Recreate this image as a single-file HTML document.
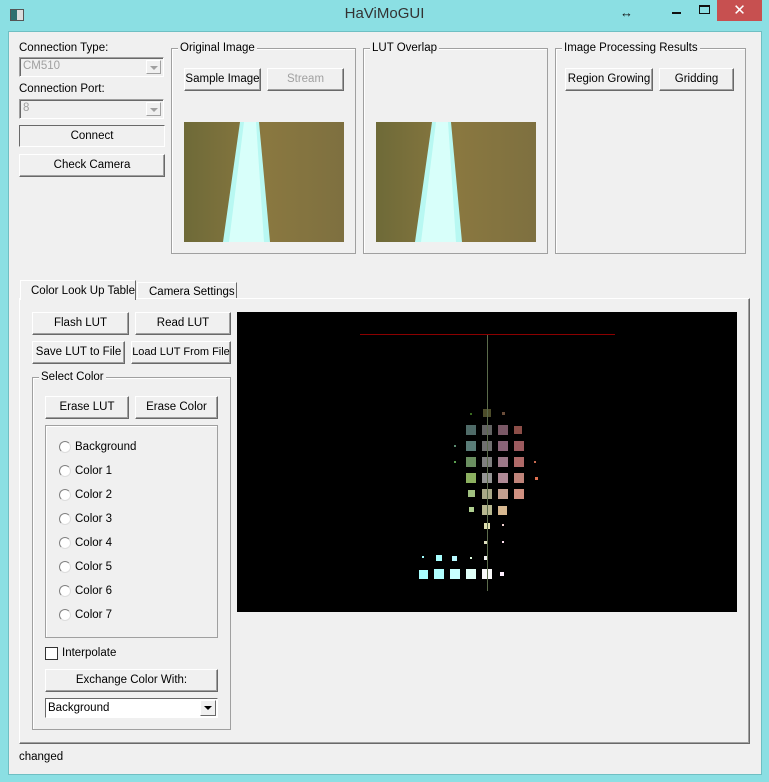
<!DOCTYPE html>
<html><head><meta charset="utf-8"><style>
*{box-sizing:border-box;margin:0;padding:0}
body{width:769px;height:782px;background:#8bdfe3;font-family:"Liberation Sans",sans-serif;font-size:11.5px;color:#000;position:relative;overflow:hidden;white-space:nowrap}
.a{position:absolute}
.client{position:absolute;left:8px;top:31px;width:754px;height:744px;background:#f0f0f0;border:1px solid #6fbfc3}
.btn{position:absolute;background:#f0f0f0;border:1px solid;border-color:#fff #696969 #696969 #fff;box-shadow:inset -1px -1px 0 #a0a0a0;text-align:center;line-height:20px;font-size:11.5px;white-space:nowrap;overflow:hidden}
.dis{color:#a0a0a0}
.grp{position:absolute;border:1px solid #a0a0a0;box-shadow:1px 1px 0 #fff inset}
.grp span{position:absolute;top:-8px;left:6px;background:#f0f0f0;padding:0 2px;line-height:14px}
.combo{position:absolute;border:1px solid;border-color:#a0a0a0 #fff #fff #a0a0a0;box-shadow:inset 1px 1px 0 #696969;background:#f0f0f0;color:#a0a0a0;padding-left:3px;line-height:17px}
.arr{position:absolute;right:2px;top:2px;width:15px;height:14px;border:1px solid;border-color:#fff #a0a0a0 #a0a0a0 #fff}
.arr:after{content:"";position:absolute;left:3px;top:5px;border-left:4px solid transparent;border-right:4px solid transparent;border-top:4px solid #a0a0a0}
.rad{position:absolute;left:59px;width:12px;height:12px;border-radius:50%;border:1px solid;border-color:#808080 #ddd #ddd #808080;background:#fff}
.rl{position:absolute;left:75px;line-height:14px}
</style></head><body>
<div class="a" style="left:10px;top:9px;width:14px;height:12px;border:1px solid #555;background:linear-gradient(90deg,#2f6f6f 50%,#ddd 50%)"></div>
<div class="a" style="left:0;width:769px;top:5px;text-align:center;font-size:15px;color:#333">HaViMoGUI</div>
<div class="a" style="left:620px;top:5px;font-size:13px;color:#111">↔</div>
<div class="a" style="left:672px;top:12px;width:9px;height:2px;background:#111"></div>
<div class="a" style="left:699px;top:5px;width:11px;height:9px;border:1px solid #111;border-top-width:2px"></div>
<div class="a" style="left:717px;top:0;width:45px;height:21px;background:#c75050;color:#fff;text-align:center;font-size:15px;line-height:21px">✕</div>
<div class="client"></div>

<div class="a" style="left:19px;top:42px">Connection Type:</div>
<div class="combo" style="left:19px;top:57px;width:145px;height:20px">CM510<div class="arr"></div></div>
<div class="a" style="left:19px;top:83px">Connection Port:</div>
<div class="combo" style="left:19px;top:99px;width:145px;height:20px">8<div class="arr"></div></div>
<div class="btn" style="left:19px;top:125px;width:146px;height:22px;border-color:#696969 #fff #fff #696969;box-shadow:none">Connect</div>
<div class="btn" style="left:19px;top:154px;width:146px;height:23px">Check Camera</div>

<div class="grp" style="left:171px;top:48px;width:185px;height:206px"><span>Original Image</span></div>
<div class="btn" style="left:184px;top:68px;width:77px;height:23px">Sample Image</div>
<div class="btn dis" style="left:267px;top:68px;width:77px;height:23px">Stream</div>
<svg class="a" style="left:184px;top:122px" width="160" height="120"><defs><linearGradient id="g" x1="0" x2="1"><stop offset="0" stop-color="#6e6a38"/><stop offset=".5" stop-color="#8a7840"/><stop offset="1" stop-color="#7e7040"/></linearGradient></defs><rect width="160" height="120" fill="url(#g)"/><polygon points="56,0 75,0 86,120 39,120" fill="#b8f8f2"/><polygon points="60,0 72,0 80,120 45,120" fill="#d8fffa"/></svg>

<div class="grp" style="left:363px;top:48px;width:185px;height:206px"><span>LUT Overlap</span></div>
<svg class="a" style="left:376px;top:122px" width="160" height="120"><rect width="160" height="120" fill="url(#g)"/><polygon points="56,0 75,0 86,120 39,120" fill="#b8f8f2"/><polygon points="60,0 72,0 80,120 45,120" fill="#d8fffa"/></svg>

<div class="grp" style="left:555px;top:48px;width:191px;height:206px"><span>Image Processing Results</span></div>
<div class="btn" style="left:565px;top:68px;width:88px;height:23px">Region Growing</div>
<div class="btn" style="left:659px;top:68px;width:75px;height:23px">Gridding</div>

<div class="a" style="left:19px;top:298px;width:731px;height:446px;border:1px solid;border-color:#fff #696969 #696969 #fff;box-shadow:inset -1px -1px 0 #a0a0a0"></div>
<div class="a" style="left:20px;top:280px;width:116px;height:20px;background:#f0f0f0;border:1px solid;border-color:#fff #696969 transparent #fff;border-bottom:none;padding:4px 0 0 10px">Color Look Up Table</div>
<div class="a" style="left:137px;top:282px;width:100px;height:16px;border:1px solid;border-color:#fff #696969 transparent #fff;border-bottom:none;padding:3px 0 0 11px">Camera Settings</div>

<div class="btn" style="left:32px;top:312px;width:97px;height:23px">Flash LUT</div>
<div class="btn" style="left:135px;top:312px;width:96px;height:23px">Read LUT</div>
<div class="btn" style="left:32px;top:341px;width:93px;height:23px">Save LUT to File</div>
<div class="btn" style="left:131px;top:341px;width:100px;height:23px;font-size:11px">Load LUT From File</div>
<div class="grp" style="left:32px;top:377px;width:199px;height:353px"><span>Select Color</span></div>
<div class="btn" style="left:45px;top:396px;width:84px;height:23px">Erase LUT</div>
<div class="btn" style="left:135px;top:396px;width:83px;height:23px">Erase Color</div>
<div class="grp" style="left:45px;top:425px;width:173px;height:213px"></div>
<div class="rad" style="top:441px"></div><div class="rl" style="top:440px">Background</div>
<div class="rad" style="top:465px"></div><div class="rl" style="top:464px">Color 1</div>
<div class="rad" style="top:489px"></div><div class="rl" style="top:488px">Color 2</div>
<div class="rad" style="top:513px"></div><div class="rl" style="top:512px">Color 3</div>
<div class="rad" style="top:537px"></div><div class="rl" style="top:536px">Color 4</div>
<div class="rad" style="top:561px"></div><div class="rl" style="top:560px">Color 5</div>
<div class="rad" style="top:585px"></div><div class="rl" style="top:584px">Color 6</div>
<div class="rad" style="top:609px"></div><div class="rl" style="top:608px">Color 7</div>
<div class="a" style="left:45px;top:647px;width:13px;height:13px;border:1px solid #333;background:#fff"></div>
<div class="a" style="left:62px;top:647px">Interpolate</div>
<div class="btn" style="left:45px;top:669px;width:173px;height:23px">Exchange Color With:</div>
<div class="a" style="left:45px;top:698px;width:173px;height:20px;border:1px solid;border-color:#696969 #fff #fff #696969;background:#fff;padding-left:2px;line-height:18px">Background<div class="a" style="right:1px;top:1px;width:16px;height:16px;background:#f0f0f0;border:1px solid;border-color:#fff #696969 #696969 #fff"><div class="a" style="left:3px;top:5px;border-left:4px solid transparent;border-right:4px solid transparent;border-top:4px solid #000"></div></div></div>

<svg class="a" style="left:237px;top:312px" width="500" height="300">
<rect width="500" height="300" fill="#000"/>
<line x1="123" y1="22.5" x2="378" y2="22.5" stroke="#8b0000"/>
<g transform="translate(-237,-312)">
<rect x="483" y="409" width="8" height="8" fill="#4d4d2a"/><rect x="470" y="413" width="2" height="2" fill="#3a6a20"/><rect x="502" y="412" width="3" height="3" fill="#6a4d3a"/>
<rect x="466" y="425" width="10" height="10" fill="#4f6b68"/><rect x="482" y="425" width="10" height="10" fill="#636363"/><rect x="498" y="425" width="10" height="10" fill="#7a5866"/><rect x="514" y="426" width="8" height="8" fill="#8c4e48"/>
<rect x="466" y="441" width="10" height="10" fill="#5a7d78"/><rect x="482" y="441" width="10" height="10" fill="#707070"/><rect x="498" y="441" width="10" height="10" fill="#8a6478"/><rect x="514" y="441" width="10" height="10" fill="#9c5a5e"/><rect x="454" y="445" width="2" height="2" fill="#5a8a70"/>
<rect x="466" y="457" width="10" height="10" fill="#6a8f60"/><rect x="482" y="457" width="10" height="10" fill="#7f7f7f"/><rect x="498" y="457" width="10" height="10" fill="#9c7888"/><rect x="514" y="457" width="10" height="10" fill="#b06a68"/><rect x="454" y="461" width="2" height="2" fill="#5aa050"/><rect x="534" y="461" width="2" height="2" fill="#c86a50"/>
<rect x="466" y="473" width="10" height="10" fill="#8cb060"/><rect x="482" y="473" width="10" height="10" fill="#949494"/><rect x="498" y="473" width="10" height="10" fill="#b08a96"/><rect x="514" y="473" width="10" height="10" fill="#c0847a"/><rect x="535" y="477" width="3" height="3" fill="#e07050"/>
<rect x="468" y="490" width="7" height="7" fill="#a0c080"/><rect x="482" y="489" width="10" height="10" fill="#a8a888"/><rect x="498" y="489" width="10" height="10" fill="#c4a090"/><rect x="514" y="489" width="10" height="10" fill="#d09080"/>
<rect x="469" y="507" width="5" height="5" fill="#b0d090"/><rect x="482" y="505" width="10" height="10" fill="#b8b890"/><rect x="498" y="506" width="9" height="9" fill="#d8b890"/>
<rect x="484" y="523" width="6" height="6" fill="#e0e0b0"/><rect x="502" y="524" width="2" height="2" fill="#f0d0d0"/>
<rect x="484" y="541" width="3" height="3" fill="#e0e0c0"/><rect x="502" y="541" width="2" height="2" fill="#ffe0f0"/>
<rect x="422" y="556" width="2" height="2" fill="#a0ffff"/><rect x="436" y="555" width="6" height="6" fill="#a8ffff"/><rect x="452" y="556" width="5" height="5" fill="#b8f8ff"/><rect x="470" y="557" width="2" height="2" fill="#e0ffe0"/><rect x="484" y="556" width="4" height="4" fill="#f0f0f0"/>
<rect x="419" y="570" width="9" height="9" fill="#a8ffff"/><rect x="434" y="569" width="10" height="10" fill="#b0ffff"/><rect x="450" y="569" width="10" height="10" fill="#c8ffff"/><rect x="466" y="569" width="10" height="10" fill="#e0fff8"/><rect x="482" y="569" width="10" height="10" fill="#f8f8f8"/><rect x="500" y="572" width="4" height="4" fill="#fff0ff"/>
<line x1="487.5" y1="335" x2="487.5" y2="591" stroke="#5a6a4a"/>
</g>
</svg>

<div class="a" style="left:19px;top:751px">changed</div>
</body></html>
